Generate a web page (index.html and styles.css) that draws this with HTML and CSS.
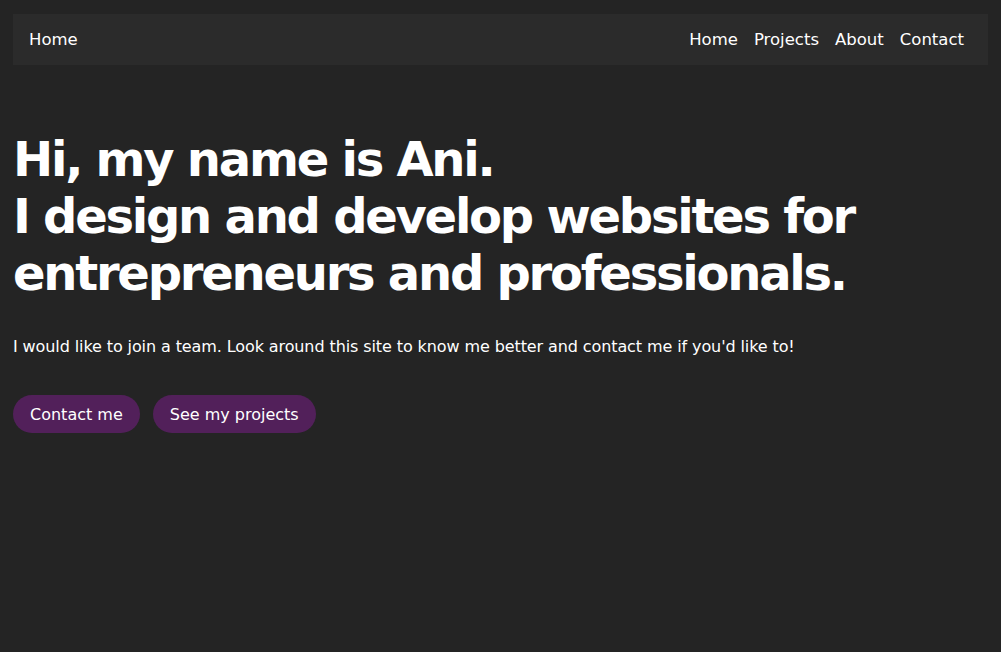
FILE: index.html
```html
<!DOCTYPE html>
<html lang="en">
<head>
<meta charset="utf-8">
<title>Ani</title>
<link rel="stylesheet" href="styles.css">
</head>
<body>
<header class="navbar">
  <a class="brand" href="#">Home</a>
  <nav class="links">
    <a href="#">Home</a>
    <a href="#">Projects</a>
    <a href="#">About</a>
    <a href="#">Contact</a>
  </nav>
</header>
<main class="hero">
  <h1 class="title">Hi, my name is Ani.<br>I design and develop websites for entrepreneurs and professionals.</h1>
  <p class="lead">I would like to join a team. Look around this site to know me better and contact me if you'd like to!</p>
  <div class="actions">
    <a class="btn" href="#">Contact me</a>
    <a class="btn" href="#">See my projects</a>
  </div>
</main>
</body>
</html>
```
FILE: styles.css
```css
html, body {
  margin: 0;
  background: #242424;
}
body {
  padding: 14px 13px;
  font-family: "DejaVu Sans", "Noto Sans", sans-serif;
  color: #ffffff;
}
a { color: #ffffff; text-decoration: none; }
.navbar {
  height: 51px;
  background: #2b2b2b;
  display: flex;
  align-items: center;
  justify-content: space-between;
  padding: 0 16px 0 16px;
}
.brand { font-size: 16.5px; }
.links { display: flex; }
.links a { font-size: 16.5px; margin: 0 8px; }
.title {
  margin: 66px 0 0 0;
  font-size: 48px;
  line-height: 57px;
  font-weight: 700;
  letter-spacing: -2.25px;
  max-width: 880px;
}
.lead {
  margin: 35px 0 0 0;
  font-size: 16px;
  letter-spacing: -0.1px;
}
.actions {
  display: flex;
  gap: 13px;
  margin-top: 39px;
}
.btn {
  height: 38px;
  display: flex;
  align-items: center;
  padding: 0 17px 0 17px;
  border-radius: 19px;
  background: #52205a;
  font-size: 16px;
}
```
